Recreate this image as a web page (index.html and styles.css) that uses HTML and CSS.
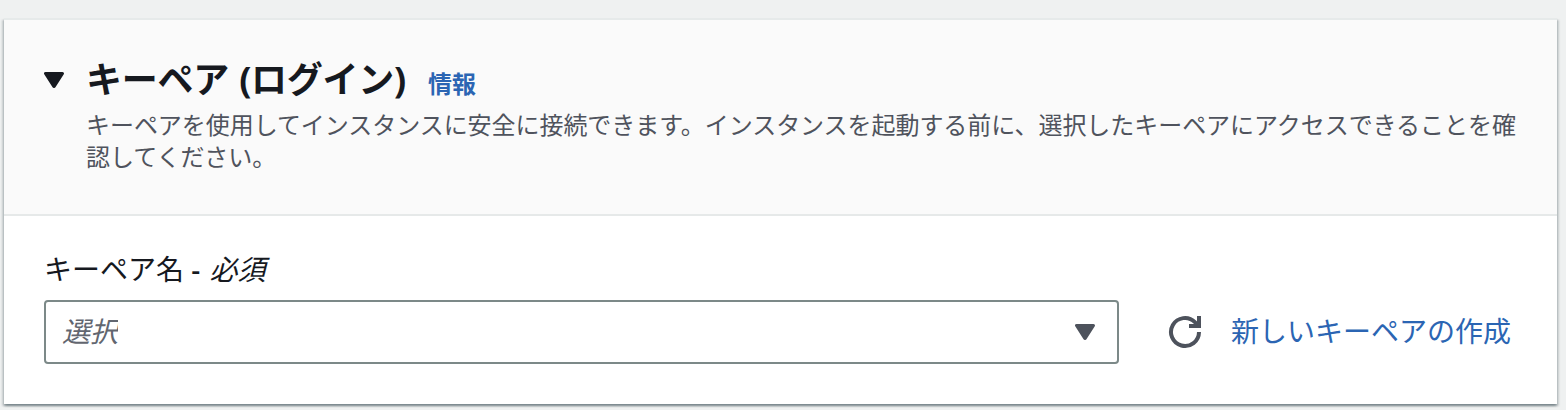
FILE: index.html
```html
<!DOCTYPE html>
<html lang="ja">
<head>
<meta charset="utf-8">
<title>キーペア (ログイン)</title>
<link rel="stylesheet" href="styles.css">
</head>
<body>
<section class="card">
  <header class="card-header">
    <svg class="caret" viewBox="0 0 20 17"><path d="M1.5 1.5h17l-8.3 13h-.4z" fill="#16191f" stroke="#16191f" stroke-width="3" stroke-linejoin="round"/></svg>
    <div class="heading">
      <div class="title-row"><h2 class="title">キーペア <span class="paren">(</span>ログイン)</h2><a class="info">情報</a></div>
      <p class="description">キーペアを使用してインスタンスに安全に接続できます。インスタンスを起動する前に、選択したキーペアにアクセスできることを確<br>認してください。</p>
    </div>
  </header>
  <div class="card-body">
    <label class="label">キーペア名 <em class="required"><span class="dash">-</span> 必須</em></label>
    <div class="controls">
      <div class="select"><span class="placeholder">選択</span><svg class="select-caret" viewBox="0 0 20 17"><path d="M1.5 1.5h17l-8.3 13h-.4z" fill="#4d525c" stroke="#4d525c" stroke-width="3" stroke-linejoin="round"/></svg></div>
      <svg class="refresh" viewBox="0 0 34 34" fill="none" stroke="#4d525c" stroke-width="4"><path d="M31 17a14 14 0 1 1-4.1-9.9l3 3M31 1v10H21"/></svg>
      <a class="create">新しいキーペアの作成</a>
    </div>
  </div>
</section>
</body>
</html>
```
FILE: styles.css
```css
* { box-sizing: border-box; }
body { margin: 0; height: 410px; overflow: hidden; padding: 18px 9px 0 4px; background: #eff1f1; color: #16191f; font-family: "Noto Sans", "Noto Sans CJK JP", sans-serif; }
.card { height: 386px; background: #fff; border-top: 2px solid #e6eaea; box-shadow: 0 2px 2px rgba(0,28,36,.3), 2px 2px 2px rgba(0,28,36,.15), -2px 2px 2px rgba(0,28,36,.15); }
.card-header { display: flex; height: 196px; padding: 37px 36px 0 40px; background: #fafafa; border-bottom: 2px solid #e6e9e9; }
.caret { flex: none; width: 20px; height: 17px; margin: 15px 22px 0 0; }
.title-row { display: flex; align-items: baseline; height: 52px; }
.title { margin: 0; font-size: 36px; line-height: 46px; font-weight: 700; letter-spacing: -0.25px; white-space: nowrap; }
.paren { margin-left: 1px; }
.info { margin-left: 22px; font-size: 24px; font-weight: 700; letter-spacing: -0.1px; color: #2b65b3; white-space: nowrap; }
.description { margin: 0; font-size: 24px; line-height: 32px; letter-spacing: -0.045px; color: #4f535d; white-space: nowrap; }
.card-body { padding: 33px 40px 0; }
.label { display: block; height: 51px; font-size: 28px; line-height: 40px; }
.dash { display: inline-block; margin-right: 2px; font-style: normal; font-weight: 500; }
.controls { display: flex; align-items: center; }
.select { display: flex; align-items: center; justify-content: space-between; width: 1075px; height: 64px; padding: 0 22px 0 16px; border: 2px solid #7c8988; border-radius: 4px; }
.placeholder { width: 56px; height: 40px; overflow: hidden; margin-top: -3px; font-size: 28px; line-height: 40px; font-style: italic; color: #62666f; white-space: nowrap; }
.select-caret { width: 20px; height: 17px; }
.refresh { width: 34px; height: 34px; margin: 0 29px 0 49px; }
.create { margin-top: -2px; font-size: 28px; line-height: 40px; color: #2b65b3; white-space: nowrap; }
```
